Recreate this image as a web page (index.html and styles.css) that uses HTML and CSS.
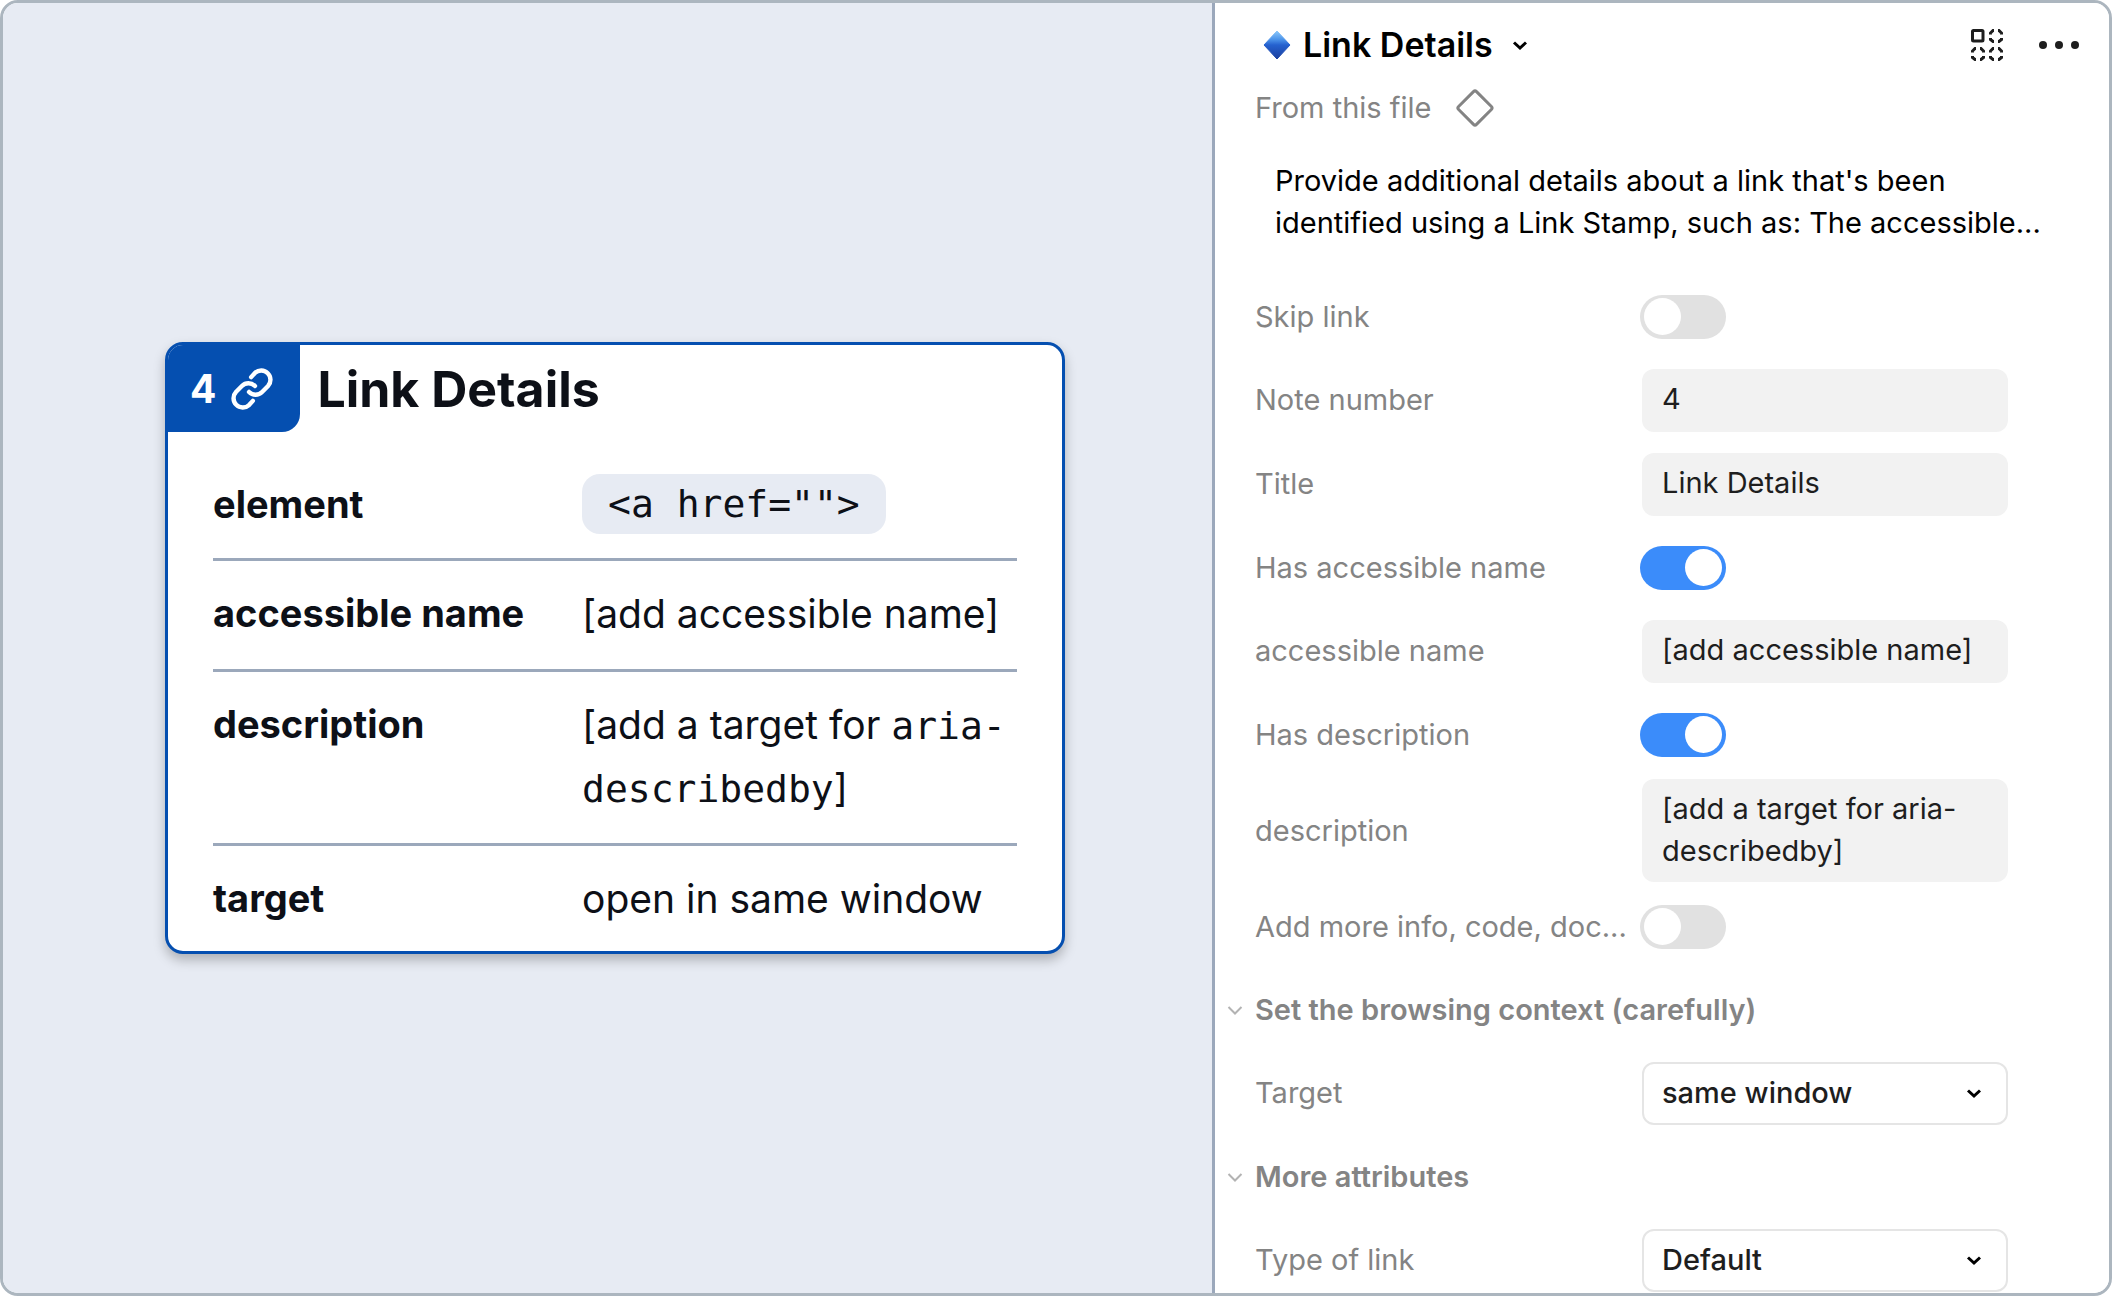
FILE: index.html
```html
<!DOCTYPE html>
<html lang="en">
<head>
<meta charset="utf-8">
<meta name="viewport" content="width=device-width, initial-scale=1">
<title>Link Details</title>
<link rel="stylesheet" href="styles.css">
</head>
<body>
<div class="frame">
  <main class="canvas">
    <article class="card">
      <header class="card-header">
        <div class="stamp">
          <span>4</span>
          <svg class="stamp-icon" viewBox="28 28 200 200" aria-hidden="true">
            <path d="M124 71.400l18.100-19.800a44.100 44.100 0 0 1 62.300 62.300l-28.300 28.200a43.900 43.900 0 0 1-62.200 0"/>
            <path d="M132 184.600l-18.100 19.800a44.100 44.100 0 0 1-62.300-62.300l28.300-28.200a43.900 43.900 0 0 1 62.200 0"/>
          </svg>
        </div>
        <h1 class="card-title">Link Details</h1>
      </header>
      <table class="specs">
        <tbody>
          <tr><th scope="row">element</th><td><code class="chip">&lt;a href=""&gt;</code></td></tr>
          <tr><th scope="row">accessible name</th><td>[add accessible name]</td></tr>
          <tr><th scope="row">description</th><td>[add a target for <code>aria-<br>describedby</code>]</td></tr>
          <tr><th scope="row">target</th><td>open in same window</td></tr>
        </tbody>
      </table>
    </article>
  </main>

  <aside class="panel">
    <header class="panel-header">
      <button class="component" type="button">
        <svg class="gem" viewBox="0 0 28 30" aria-hidden="true">
          <defs>
            <linearGradient id="gem" x1="0" y1="0" x2="0" y2="1">
              <stop offset="0" stop-color="#8cc8fa"/>
              <stop offset=".3" stop-color="#4c94ea"/>
              <stop offset=".5" stop-color="#2561cf"/>
              <stop offset="1" stop-color="#1b3f9e"/>
            </linearGradient>
          </defs>
          <path d="M14 1 27 15 14 29 1 15Z" fill="url(#gem)" stroke="url(#gem)" stroke-linejoin="round"/>
        </svg>
        <span>Link Details</span>
        <svg class="chevron" viewBox="0 0 16 16" aria-hidden="true"><path d="M2 5.500 8 11l6-5.500"/></svg>
      </button>
      <div class="actions">
        <button type="button" aria-label="Explore variants">
          <svg class="variants" viewBox="0 0 32 32" aria-hidden="true">
            <rect x="1.500" y="1.500" width="10.500" height="10.500" rx="1"/>
            <g id="dashed">
              <path d="M19.500 5.500V4l2.500-2.500h1M27 1.500h1L30.500 4v1.500M30.500 9v1.500L28 12.500h-1M23 12.500h-1l-2.500-2V9"/>
            </g>
            <use href="#dashed" y="18"/>
            <use href="#dashed" x="-18" y="18"/>
          </svg>
        </button>
        <button type="button" aria-label="More options">
          <svg class="dots" viewBox="0 0 40 8" aria-hidden="true"><circle cx="4" cy="4" r="4"/><circle cx="20" cy="4" r="4"/><circle cx="36" cy="4" r="4"/></svg>
        </button>
      </div>
    </header>
    <div class="source">
      <span>From this file</span>
      <svg class="outline-gem" viewBox="0 0 38 38" aria-hidden="true"><path d="M17.500 2.600 2.600 17.500q-1.500 1.500 0 3l14.900 14.900q1.500 1.500 3 0l14.900-14.900q1.500-1.500 0-3L20.500 2.600q-1.500-1.500-3 0Z"/></svg>
    </div>
    <p class="summary">Provide additional details about a link that's been<br>identified using a Link Stamp, such as: The accessible...</p>

    <form class="props">
      <div class="row"><label for="skip">Skip link</label><input class="switch" type="checkbox" role="switch" id="skip"></div>
      <div class="row boxed"><label for="number">Note number</label><input class="field" type="text" id="number" value="4"></div>
      <div class="row boxed"><label for="title">Title</label><input class="field" type="text" id="title" value="Link Details"></div>
      <div class="row"><label for="has-name">Has accessible name</label><input class="switch" type="checkbox" role="switch" id="has-name" checked></div>
      <div class="row boxed"><label for="name">accessible name</label><input class="field" type="text" id="name" value="[add accessible name]"></div>
      <div class="row"><label for="has-desc">Has description</label><input class="switch" type="checkbox" role="switch" id="has-desc" checked></div>
      <div class="row boxed"><label for="desc">description</label><textarea class="field" id="desc" rows="2">[add a target for aria-describedby]</textarea></div>
      <div class="row"><label for="more">Add more info, code, doc...</label><input class="switch" type="checkbox" role="switch" id="more"></div>
      <h2 class="section"><svg class="chevron faint" viewBox="0 0 16 16" aria-hidden="true"><path d="M1.500 5 8 11.500 14.500 5"/></svg>Set the browsing context (carefully)</h2>
      <div class="row boxed"><label for="target">Target</label>
        <div class="picker"><select id="target"><option>same window</option><option>new window</option></select><svg class="chevron" viewBox="0 0 16 16" aria-hidden="true"><path d="M2 5.500 8 11l6-5.500"/></svg></div>
      </div>
      <h2 class="section"><svg class="chevron faint" viewBox="0 0 16 16" aria-hidden="true"><path d="M1.500 5 8 11.500 14.500 5"/></svg>More attributes</h2>
      <div class="row boxed"><label for="kind">Type of link</label>
        <div class="picker"><select id="kind"><option>Default</option><option>Download</option></select><svg class="chevron" viewBox="0 0 16 16" aria-hidden="true"><path d="M2 5.500 8 11l6-5.500"/></svg></div>
      </div>
    </form>
  </aside>
</div>
</body>
</html>
```
FILE: styles.css
```css
*, *::before, *::after { box-sizing: border-box; }

body {
  margin: 0;
  background: #fff;
  font-family: Inter, "Liberation Sans", sans-serif;
}

h1, h2, p { margin: 0; }

button {
  display: flex;
  align-items: center;
  padding: 0;
  border: 0;
  background: none;
  color: inherit;
  font: inherit;
}

svg { display: block; flex: none; }

.frame {
  display: grid;
  grid-template-columns: minmax(0, 1209fr) minmax(0, 897fr);
  grid-template-rows: minmax(0, 1fr);
  height: 100vh;
  overflow: hidden;
  border: 3px solid #acb6bf;
  border-radius: 18px;
}

/* Canvas */
.canvas {
  display: flex;
  align-items: center;
  justify-content: center;
  padding-left: 15px;
  background: #e7ebf3;
}

.card {
  width: 900px;
  max-width: 100%;
  overflow: hidden;
  border: 3px solid #054fb0;
  border-radius: 18px;
  background: #fff;
  color: #0d1017;
  box-shadow: 0 6px 12px rgba(0, 0, 0, .25);
}

.card-header {
  display: flex;
  align-items: center;
  gap: 17px;
  margin-bottom: 21px;
}

.stamp {
  display: flex;
  align-items: center;
  gap: 15px;
  height: 87px;
  padding: 0 27px 0 22px;
  border-bottom-right-radius: 18px;
  background: #054fb0;
  color: #fff;
  font-size: 39px;
  font-weight: 700;
}

.stamp-icon {
  width: 42px;
  height: 42px;
  fill: none;
  stroke: currentColor;
  stroke-width: 21;
  stroke-linecap: round;
  stroke-linejoin: round;
}

.card-title { font-size: 50px; font-weight: 700; }

.specs {
  width: calc(100% - 90px);
  margin: 0 45px;
  border-collapse: collapse;
  table-layout: fixed;
  font-size: 39px;
  line-height: 63px;
}

.specs th, .specs td {
  padding: 21px 0 24px;
  text-align: left;
  vertical-align: top;
}

.specs th { width: 369px; font-size: 38px; font-weight: 700; }
.specs tr { border-bottom: 3px solid #9ba8bb; }
.specs tr:last-child { border-bottom: 0; }
.specs tr:last-child > * { padding-bottom: 21px; }
.specs tr:first-child { line-height: 60px; }

code {
  font-family: "DejaVu Sans Mono", monospace;
  font-size: 38px;
  line-height: 1;
}

.chip {
  display: block;
  width: fit-content;
  padding: 0 26px;
  border-radius: 18px;
  background: #e7ebf3;
  line-height: 60px;
}

/* Properties panel */
.panel {
  padding: 21px 30px 0 40px;
  border-left: 3px solid #9ba8bb;
  background: #fff;
  color: #000;
  font-size: 29px;
  line-height: 42px;
}

.panel-header {
  display: flex;
  align-items: center;
  justify-content: space-between;
  height: 42px;
}

.component {
  gap: 12px;
  padding-left: 8px;
  font-size: 34px;
  font-weight: 600;
}

.gem { width: 28px; height: 30px; }

.chevron {
  width: 16px;
  height: 16px;
  fill: none;
  stroke: currentColor;
  stroke-width: 3;
}

.component .chevron { margin-left: 7px; }

.actions { display: flex; align-items: center; gap: 36px; }
.variants { width: 32px; height: 32px; fill: none; stroke: #1e1e1e; stroke-width: 3; }
.dots { width: 40px; height: 8px; fill: #1e1e1e; }

.source {
  display: flex;
  align-items: center;
  gap: 25px;
  margin-top: 21px;
  color: #848484;
}

.outline-gem { width: 38px; height: 38px; fill: none; stroke: currentColor; stroke-width: 3; }

.summary { margin-top: 31px; padding-left: 20px; }

.props { margin-top: 31px; }

.row {
  display: grid;
  grid-template-columns: 375px minmax(0, 366px);
  column-gap: 10px;
  align-items: center;
  min-height: 83px;
  padding: 3px 0;
}

.row.boxed { column-gap: 12px; min-height: 84px; }

.row label {
  overflow: hidden;
  color: #848484;
  text-overflow: ellipsis;
  white-space: nowrap;
}

.field {
  display: block;
  width: 100%;
  padding: 9px 20px 12px;
  border: 0;
  border-radius: 12px;
  background: #f2f2f2;
  color: #1e1e1e;
  font: inherit;
  resize: none;
}

input.field { height: 63px; }
textarea.field { height: 103px; overflow: hidden; }

.switch {
  width: 86px;
  height: 44px;
  margin: 0;
  padding: 3px 4px;
  border-radius: 22px;
  background: #e1e1e1;
  appearance: none;
}

.switch::before {
  content: "";
  display: block;
  width: 37px;
  height: 37px;
  border-radius: 50%;
  background: #fff;
}

.switch:checked { background: #3b8cfa; }
.switch:checked::before { margin-left: auto; }

.section {
  display: flex;
  align-items: center;
  gap: 12px;
  height: 83px;
  margin-left: -28px;
  color: #848484;
  font-size: 29px;
  font-weight: 600;
}

.chevron.faint { color: #b3b3b3; stroke-width: 2; }

.picker { display: grid; align-items: center; }
.picker > * { grid-area: 1 / 1; }
.picker .chevron { justify-self: end; margin-right: 26px; pointer-events: none; }

.picker select {
  width: 100%;
  height: 63px;
  padding: 0 50px 0 18px;
  border: 2px solid #e5e5e5;
  border-radius: 12px;
  background: #fff;
  color: #1e1e1e;
  font: inherit;
  font-weight: 500;
  appearance: none;
}
```
